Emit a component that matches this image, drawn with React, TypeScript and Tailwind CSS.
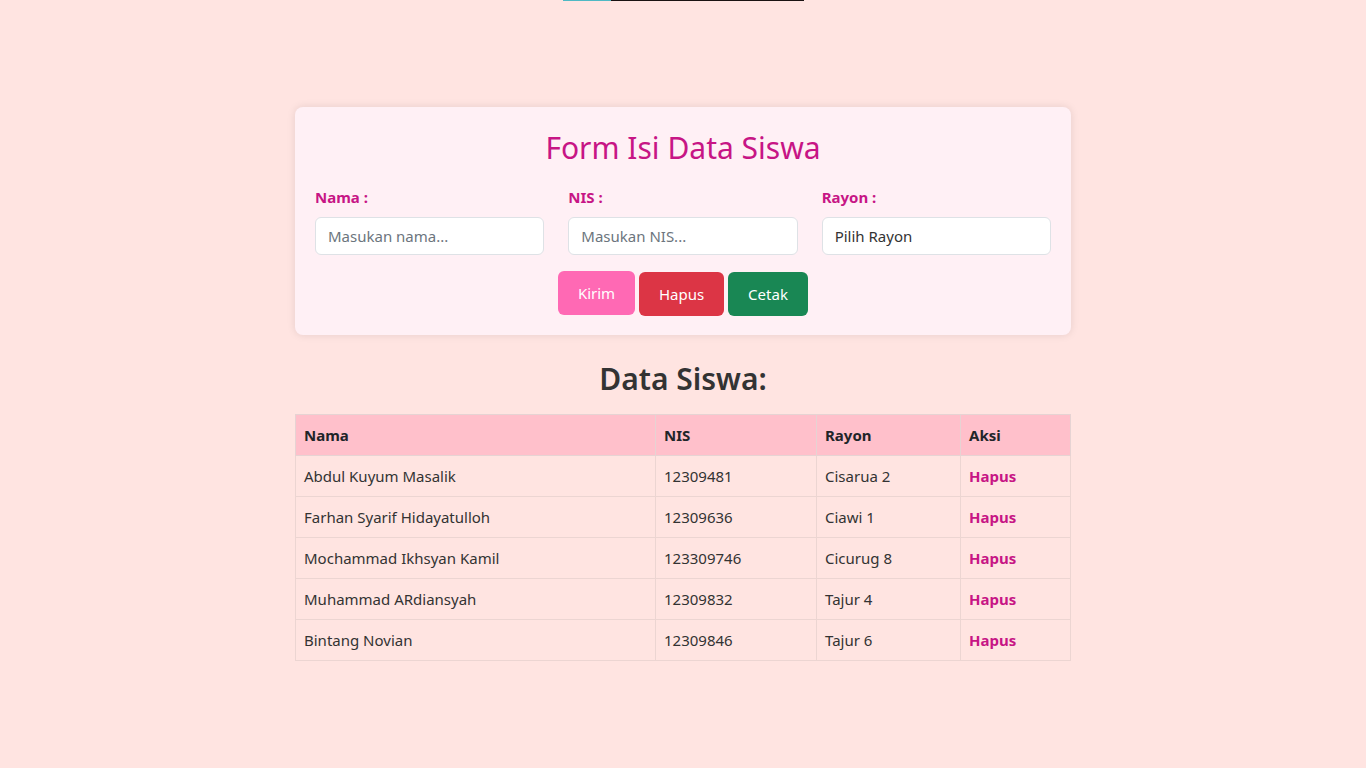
import { useState } from 'react'

const rows = [
  { nama: 'Abdul Kuyum Masalik', nis: '12309481', rayon: 'Cisarua 2' },
  { nama: 'Farhan Syarif Hidayatulloh', nis: '12309636', rayon: 'Ciawi 1' },
  { nama: 'Mochammad Ikhsyan Kamil', nis: '123309746', rayon: 'Cicurug 8' },
  { nama: 'Muhammad ARdiansyah', nis: '12309832', rayon: 'Tajur 4' },
  { nama: 'Bintang Novian', nis: '12309846', rayon: 'Tajur 6' },
]

export default function App() {
  const [data, setData] = useState(rows)

  return (
    <div
      className="min-h-screen bg-[#ffe4e1] text-[#333333]"
      style={{ fontFamily: '"Noto Sans", "Open Sans", sans-serif' }}
    >
      {/* stray bar at the very top */}
      <div className="flex justify-center">
        <div className="flex h-px">
          <div className="w-[48px] bg-[#4fb9c4]" />
          <div className="w-[193px] bg-[#1a1212]" />
        </div>
      </div>

      <div className="mx-auto w-[776px] pt-[106px]">
        <div className="rounded-lg bg-[#fff0f5] px-5 pb-[19px] pt-[21px] shadow-[0_0_8px_rgba(0,0,0,0.1)]">
          <h2 className="text-center text-[30px] leading-[40px] text-[#c71585]">Form Isi Data Siswa</h2>
          <div className="mt-[18px] grid grid-cols-3 gap-x-6">
            {[
              ['Nama :', 'Masukan nama...'],
              ['NIS :', 'Masukan NIS...'],
            ].map(([label, ph]) => (
              <div key={label}>
                <label className="block text-[15px] font-bold leading-[22px] text-[#c71585]">{label}</label>
                <input
                  placeholder={ph}
                  className="mt-[9px] h-[38px] w-full rounded-md border border-[#dee2e6] bg-white px-3 text-[15px] text-[#212529] outline-none placeholder:text-[#6c757d]"
                />
              </div>
            ))}
            <div>
              <label className="block text-[15px] font-bold leading-[22px] text-[#c71585]">Rayon :</label>
              <div className="mt-[9px] flex h-[38px] w-full items-center rounded-md border border-[#dee2e6] bg-white px-3 text-[15px] text-[#333333]">
                Pilih Rayon
              </div>
            </div>
          </div>
          <div className="mt-4 flex items-start justify-center gap-1">
            <button className="h-[44px] w-[77px] rounded-md bg-[#ff69b4] text-[15px] text-white">Kirim</button>
            <button className="mt-px h-[44px] w-[85px] rounded-md bg-[#dc3545] text-[15px] text-white">Hapus</button>
            <button className="mt-px h-[44px] w-[80px] rounded-md bg-[#198754] text-[15px] text-white">Cetak</button>
          </div>
        </div>

        <h2 className="mt-[22px] text-center text-[30px] font-semibold leading-[44px] text-[#333333]">Data Siswa:</h2>

        <table className="mt-[13px] w-full border-collapse text-[15px]">
          <thead>
            <tr className="bg-[#ffc0cb]">
              <th className="h-[41px] w-[360px] border border-[#e6d3d3] px-2 text-left font-bold text-[#212529]">Nama</th>
              <th className="w-[161px] border border-[#e6d3d3] px-2 text-left font-bold text-[#212529]">NIS</th>
              <th className="w-[144px] border border-[#e6d3d3] px-2 text-left font-bold text-[#212529]">Rayon</th>
              <th className="border border-[#e6d3d3] px-2 text-left font-bold text-[#212529]">Aksi</th>
            </tr>
          </thead>
          <tbody>
            {data.map((r, i) => (
              <tr key={r.nis} className="bg-[#ffe4e1]">
                <td className="h-[41px] border border-[#ecd5d2] px-2">{r.nama}</td>
                <td className="border border-[#ecd5d2] px-2">{r.nis}</td>
                <td className="border border-[#ecd5d2] px-2">{r.rayon}</td>
                <td className="border border-[#ecd5d2] px-2">
                  <button
                    className="font-bold text-[#c71585]"
                    onClick={() => setData(data.filter((_, j) => j !== i))}
                  >
                    Hapus
                  </button>
                </td>
              </tr>
            ))}
          </tbody>
        </table>
      </div>
    </div>
  )
}
